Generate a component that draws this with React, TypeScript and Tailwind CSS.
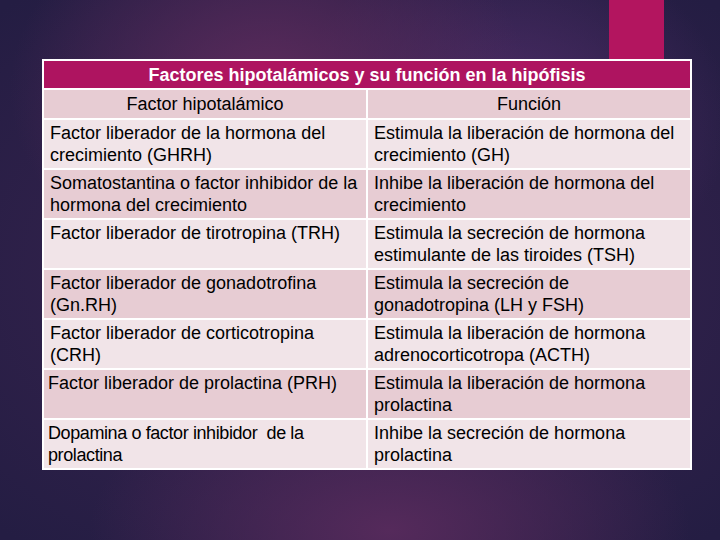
const rows = [
  ["Factor liberador de la hormona del crecimiento (GHRH)", "Estimula la liberación de hormona del crecimiento (GH)"],
  ["Somatostantina o factor inhibidor de la hormona del crecimiento", "Inhibe la liberación de hormona del crecimiento"],
  ["Factor liberador de tirotropina (TRH)", "Estimula la secreción de hormona estimulante de las tiroides (TSH)"],
  ["Factor liberador de gonadotrofina (Gn.RH)", "Estimula la secreción de gonadotropina (LH y FSH)"],
  ["Factor liberador de corticotropina (CRH)", "Estimula la liberación de hormona adrenocorticotropa (ACTH)"],
  ["Factor liberador de prolactina (PRH)", "Estimula la liberación de hormona prolactina"],
  ["Dopamina o factor inhibidor  de la prolactina", "Inhibe la secreción de hormona prolactina"],
];

export default function App() {
  return (
    <div
      className="w-[720px] h-[540px] overflow-hidden bg-[#241d43] bg-[radial-gradient(ellipse_260px_200px_at_270px_90px,#5c2b5c_0%,transparent_100%),radial-gradient(ellipse_220px_180px_at_510px_120px,#4b2c66_0%,transparent_100%),radial-gradient(ellipse_300px_160px_at_390px_530px,#552a5b_0%,transparent_100%),radial-gradient(ellipse_520px_360px_at_360px_270px,#3d2552_0%,transparent_100%)]"
      style={{ fontFamily: '"Liberation Sans", Arial, sans-serif' }}
    >
      {/* decorative bar */}
      <div className="ml-[609px] w-[55px] h-[59px] bg-[#b3155f]" />

      {/* table */}
      <div className="ml-[42px] w-[650px] bg-white p-[2px] grid grid-cols-2 gap-[2px] text-[18px] text-black">
        <div className="col-span-2 h-[27px] bg-[#ae1460] flex items-center justify-center text-white font-bold leading-none">
          Factores hipotalámicos y su función en la hipófisis
        </div>
        <div className="h-[28px] bg-[#e7ccd3] flex items-center justify-center">
          Factor hipotalámico
        </div>
        <div className="h-[28px] bg-[#e7ccd3] flex items-center justify-center">
          Función
        </div>
        {rows.map((r, i) => {
          const bg = i % 2 === 0 ? "bg-[#f1e4e8]" : "bg-[#e7ccd3]";
          const pad = i === 6 ? "tracking-[-0.4px] px-[4px]" : i === 5 ? "px-[4px]" : "px-[6px]";
          return [
            <div key={`a${i}`} className={`${bg} ${pad} h-[48px] pt-[2px] leading-[22px] whitespace-pre-wrap`}>
              {r[0]}
            </div>,
            <div key={`b${i}`} className={`${bg} h-[48px] px-[6px] pt-[2px] leading-[22px]`}>
              {r[1]}
            </div>,
          ];
        })}
      </div>
    </div>
  );
}
